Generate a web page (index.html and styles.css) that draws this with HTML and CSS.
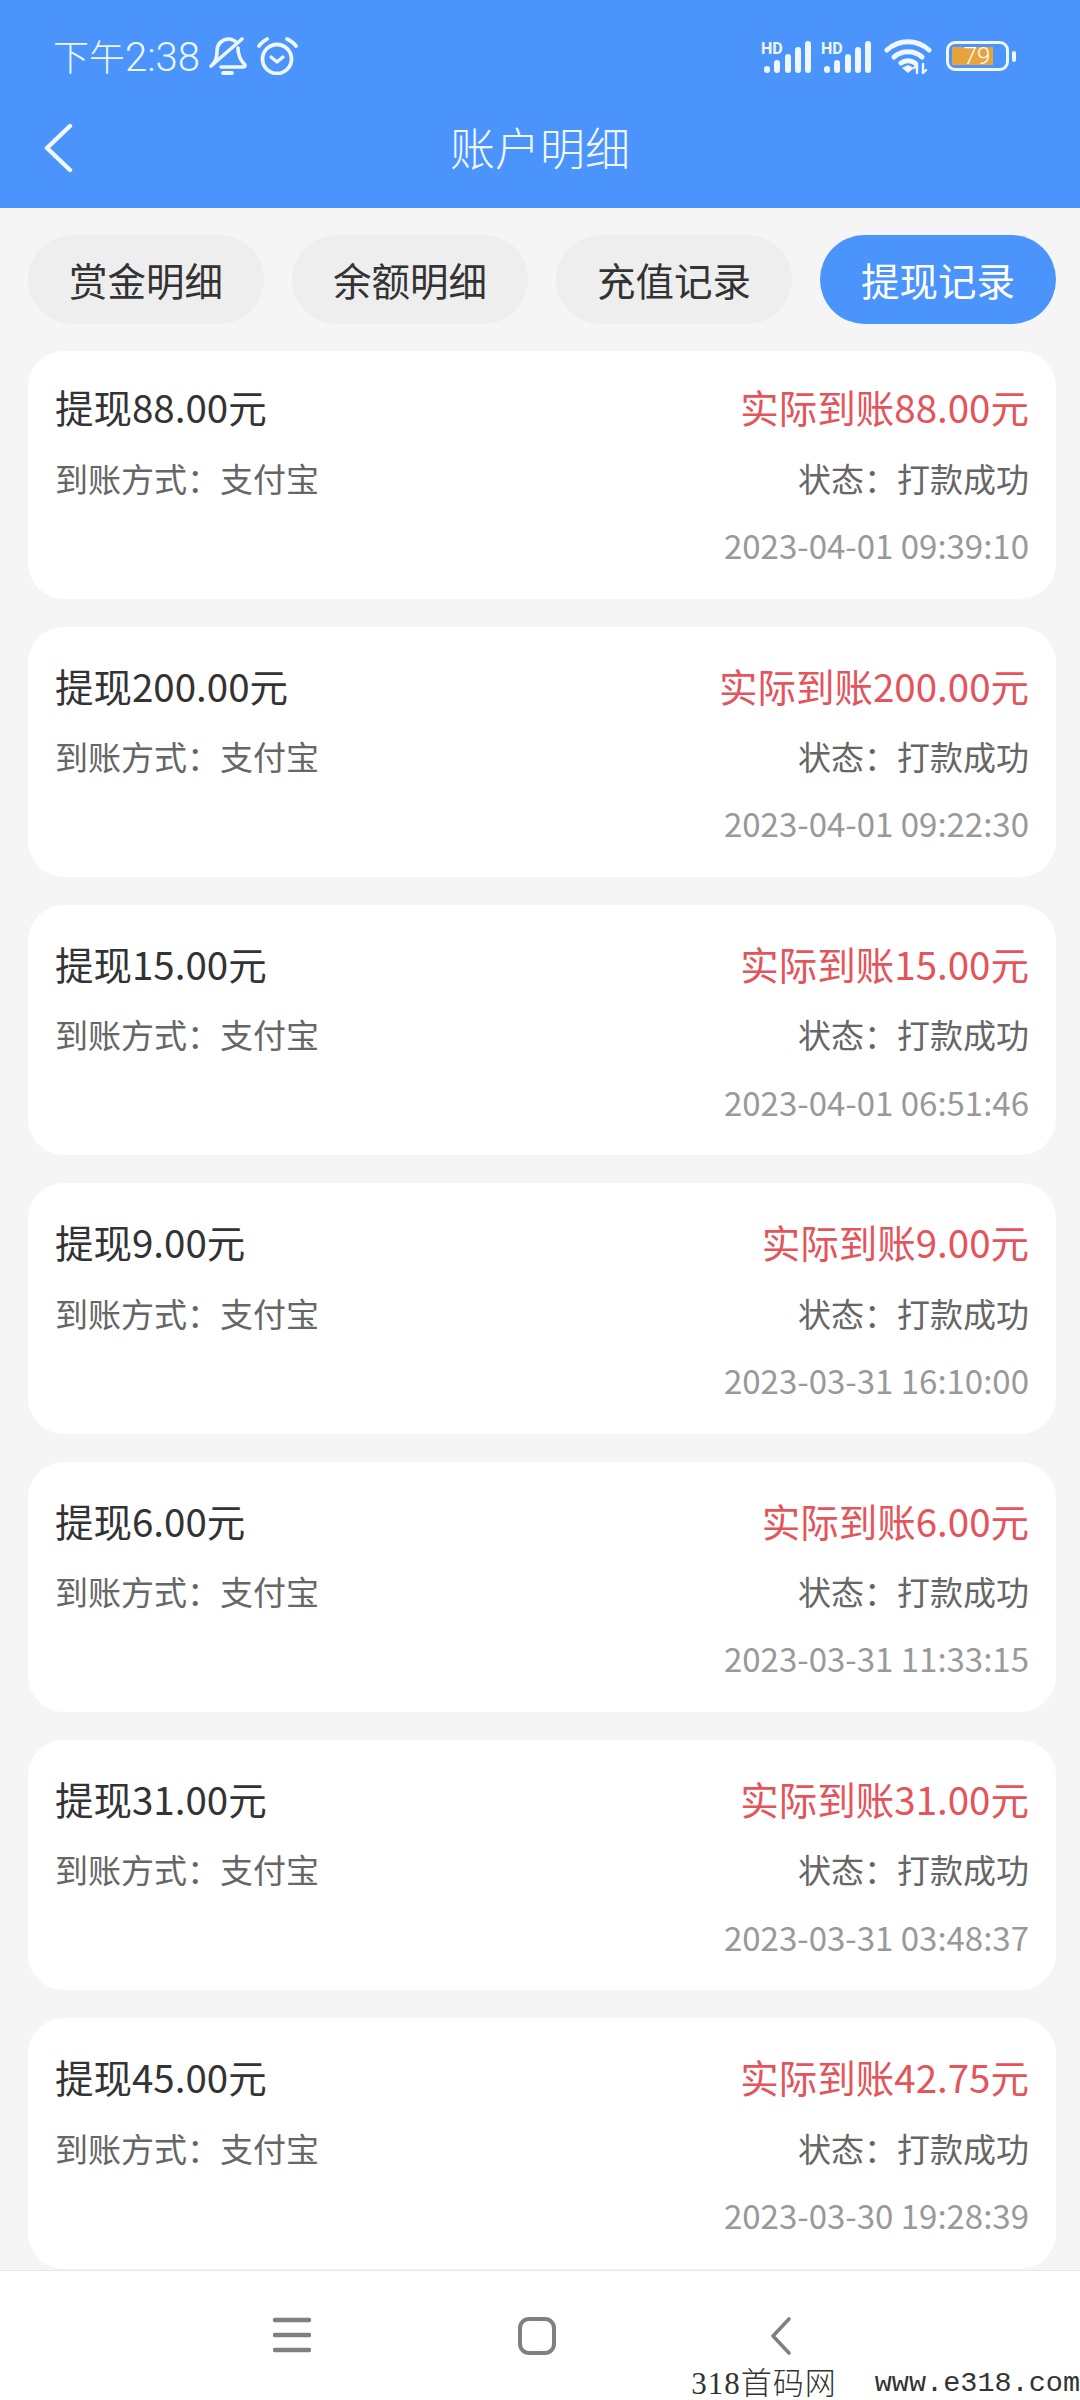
FILE: index.html
```html
<!DOCTYPE html>
<html lang="zh-CN">
<head>
    <meta charset="UTF-8">
    <meta name="viewport" content="width=device-width, initial-scale=1.0">
    <title>账户明细</title>
    <link rel="stylesheet" href="styles.css">
</head>
<body>
    <div class="page">
        <header class="header">
            <div class="status-bar">
                <div class="status-left">
                    <span class="clock">下午<span class="clock-digits">2:38</span></span>
                    <svg class="bell-icon" width="38" height="40" viewBox="0 0 38 40" fill="none" stroke="#eef6ff" stroke-width="3.6" stroke-linecap="round" stroke-linejoin="round">
                        <path d="M4 28C7 25 8 20 8 15 8 8 13 3 20 3c2 0 4 1 6 2"/>
                        <path d="M29 12c0 8 3 13 7 17 0 2-1 2-2 2H12"/>
                        <path d="M2 30L33 3"/>
                        <path d="M14 37h9" stroke-width="3.8"/>
                    </svg>
                    <svg class="alarm-icon" width="42" height="38" viewBox="0 0 42 38" fill="none" stroke="#eef6ff" stroke-width="3.8" stroke-linecap="round" stroke-linejoin="round">
                        <circle cx="20" cy="22" r="14.5"/>
                        <path d="M14 20l6 5 6-5" stroke-width="3.4"/>
                        <path d="M2 9c2-3 5-5 8-7"/>
                        <path d="M39 9c-2-3-5-5-9-7"/>
                    </svg>
                </div>
                <div class="status-right">
                    <svg class="signal-icon" width="50" height="33" viewBox="0 0 50 33">
                        <text x="0" y="14" class="hd-text">HD</text>
                        <rect x="3" y="26" width="6" height="7" rx="3" fill="#eef6ff"/>
                        <rect x="13" y="20" width="6" height="13" rx="3" fill="#eef6ff"/>
                        <rect x="24" y="14" width="6" height="19" rx="3" fill="#eef6ff"/>
                        <rect x="34" y="7" width="6" height="26" rx="3" fill="#eef6ff"/>
                        <rect x="44" y="1" width="6" height="32" rx="3" fill="#eef6ff"/>
                    </svg>
                    <svg class="signal-icon" width="50" height="33" viewBox="0 0 50 33">
                        <text x="0" y="14" class="hd-text">HD</text>
                        <rect x="3" y="26" width="6" height="7" rx="3" fill="#eef6ff"/>
                        <rect x="13" y="20" width="6" height="13" rx="3" fill="#eef6ff"/>
                        <rect x="24" y="14" width="6" height="19" rx="3" fill="#eef6ff"/>
                        <rect x="34" y="7" width="6" height="26" rx="3" fill="#eef6ff"/>
                        <rect x="44" y="1" width="6" height="32" rx="3" fill="#eef6ff"/>
                    </svg>
                    <svg class="wifi-icon" width="48" height="36" viewBox="0 0 48 36" fill="none" stroke="#eef6ff" stroke-width="5" stroke-linecap="round">
                        <path d="M3 12C15 1 33 1 45 12"/>
                        <path d="M10 19c8-7 20-7 28 0"/>
                        <path d="M17 25c4-3 10-3 14 0"/>
                        <path d="M18 30l6-3 6 3-6 5z" fill="#eef6ff" stroke="none"/>
                        <path d="M33 35v-8l-3 3M39 26v9l3-3" stroke-width="2.4"/>
                    </svg>
                    <div class="battery">
                        <div class="battery-body">
                            <div class="battery-level">79</div>
                        </div>
                        <div class="battery-tip"></div>
                    </div>
                </div>
            </div>
            <div class="toolbar">
                <svg class="back-icon" width="30" height="50" viewBox="0 0 30 50" fill="none" stroke="#f2f8ff" stroke-width="4.4" stroke-linecap="round" stroke-linejoin="round">
                    <path d="M27 3L4 25l23 22"/>
                </svg>
                <h1 class="page-title">账户明细</h1>
            </div>
        </header>

        <div class="tabs">
            <div class="tab">赏金明细</div>
            <div class="tab">余额明细</div>
            <div class="tab">充值记录</div>
            <div class="tab tab-active">提现记录</div>
        </div>

        <div class="record-list">
            <div class="record">
                <div class="record-row">
                    <div class="record-title">提现88.00元</div>
                    <div class="record-amount">实际到账88.00元</div>
                </div>
                <div class="record-row record-info">
                    <div>到账方式：支付宝</div>
                    <div>状态：打款成功</div>
                </div>
                <div class="record-time">2023-04-01 09:39:10</div>
            </div>
            <div class="record">
                <div class="record-row">
                    <div class="record-title">提现200.00元</div>
                    <div class="record-amount">实际到账200.00元</div>
                </div>
                <div class="record-row record-info">
                    <div>到账方式：支付宝</div>
                    <div>状态：打款成功</div>
                </div>
                <div class="record-time">2023-04-01 09:22:30</div>
            </div>
            <div class="record">
                <div class="record-row">
                    <div class="record-title">提现15.00元</div>
                    <div class="record-amount">实际到账15.00元</div>
                </div>
                <div class="record-row record-info">
                    <div>到账方式：支付宝</div>
                    <div>状态：打款成功</div>
                </div>
                <div class="record-time">2023-04-01 06:51:46</div>
            </div>
            <div class="record">
                <div class="record-row">
                    <div class="record-title">提现9.00元</div>
                    <div class="record-amount">实际到账9.00元</div>
                </div>
                <div class="record-row record-info">
                    <div>到账方式：支付宝</div>
                    <div>状态：打款成功</div>
                </div>
                <div class="record-time">2023-03-31 16:10:00</div>
            </div>
            <div class="record">
                <div class="record-row">
                    <div class="record-title">提现6.00元</div>
                    <div class="record-amount">实际到账6.00元</div>
                </div>
                <div class="record-row record-info">
                    <div>到账方式：支付宝</div>
                    <div>状态：打款成功</div>
                </div>
                <div class="record-time">2023-03-31 11:33:15</div>
            </div>
            <div class="record">
                <div class="record-row">
                    <div class="record-title">提现31.00元</div>
                    <div class="record-amount">实际到账31.00元</div>
                </div>
                <div class="record-row record-info">
                    <div>到账方式：支付宝</div>
                    <div>状态：打款成功</div>
                </div>
                <div class="record-time">2023-03-31 03:48:37</div>
            </div>
            <div class="record">
                <div class="record-row">
                    <div class="record-title">提现45.00元</div>
                    <div class="record-amount">实际到账42.75元</div>
                </div>
                <div class="record-row record-info">
                    <div>到账方式：支付宝</div>
                    <div>状态：打款成功</div>
                </div>
                <div class="record-time">2023-03-30 19:28:39</div>
            </div>
        </div>

        <nav class="nav-bar">
            <svg width="38" height="36" viewBox="0 0 38 36" fill="none" stroke="#808080" stroke-width="4.4" stroke-linecap="round">
                <path d="M2 3h34M2 18h34M2 33h34"/>
            </svg>
            <svg width="38" height="38" viewBox="0 0 38 38" fill="none" stroke="#808080" stroke-width="4">
                <rect x="2" y="2" width="34" height="34" rx="9"/>
            </svg>
            <svg class="nav-back" width="24" height="38" viewBox="0 0 24 38" fill="none" stroke="#808080" stroke-width="3.6" stroke-linecap="round" stroke-linejoin="round">
                <path d="M20 2L4 19l16 17"/>
            </svg>
        </nav>

        <div class="watermark"><span class="watermark-name">318首码网</span><span class="watermark-url">www.e318.com</span></div>
    </div>
</body>
</html>
```

FILE: styles.css
```css
* {
    box-sizing: border-box;
}
body {
    margin: 0;
    font-family: "Noto Sans CJK SC", "Noto Sans", sans-serif;
    background-color: #f5f5f5;
}
.page {
    position: relative;
    display: flex;
    flex-direction: column;
    width: 1080px;
    height: 2400px;
    overflow: hidden;
}
.header {
    height: 208px;
    background-color: #4b94fb;
    flex-shrink: 0;
}
.status-bar {
    display: flex;
    justify-content: space-between;
    align-items: center;
    height: 86px;
    padding: 26px 64px 0 53px;
}
.status-left {
    display: flex;
    align-items: center;
}
.clock {
    font-size: 36px;
    font-weight: 300;
    color: #eef6ff;
    line-height: 40px;
}
.clock-digits {
    font-family: Roboto, sans-serif;
    font-weight: 300;
    font-size: 40px;
}
.bell-icon {
    margin-left: 9px;
}
.alarm-icon {
    margin-left: 10px;
}
.status-right {
    display: flex;
    align-items: center;
}
.status-right .signal-icon + .signal-icon {
    margin-left: 10px;
}
.hd-text {
    font-family: Roboto, sans-serif;
    font-size: 16px;
    font-weight: 700;
    fill: #eef6ff;
}
.wifi-icon {
    margin-left: 13px;
}
.battery {
    display: flex;
    align-items: center;
    margin-left: 14px;
}
.battery-body {
    width: 63px;
    height: 30px;
    border: 3px solid #eef6ff;
    border-radius: 9px;
    padding: 3px;
}
.battery-level {
    width: 41px;
    height: 18px;
    padding-left: 9px;
    background-color: #e8a33a;
    color: #fff;
    font-family: Roboto, sans-serif;
    font-weight: 300;
    font-size: 24px;
    line-height: 18px;
    text-align: center;
}
.battery-tip {
    width: 4px;
    height: 11px;
    margin-left: 3px;
    border-radius: 2px;
    background-color: #eef6ff;
}
.toolbar {
    display: grid;
    grid-template-columns: 1fr auto 1fr;
    align-items: center;
    height: 120px;
}
.back-icon {
    margin: 3px 0 0 43px;
}
.page-title {
    margin: 0;
    font-size: 45px;
    font-weight: 300;
    color: #f2f8ff;
}
.tabs {
    display: flex;
    gap: 28px;
    padding: 27px 24px 0 28px;
    flex-shrink: 0;
}
.tab {
    width: 236px;
    height: 89px;
    border-radius: 45px;
    background-color: #eeeeee;
    color: #333;
    font-size: 38.5px;
    line-height: 89px;
    text-align: center;
}
.tab-active {
    background-color: #4b94fb;
    color: #fff;
}
.record-list {
    flex: 1;
    display: flex;
    flex-direction: column;
    gap: 28px;
    padding: 27px 24px 0 28px;
    overflow: hidden;
}
.record {
    height: 250.33px;
    flex-shrink: 0;
    padding: 33px 27px 0;
    border-radius: 36px;
    background-color: #fff;
}
.record:first-child {
    height: 247.6px;
    padding-top: 30.3px;
}
.record-row {
    display: flex;
    justify-content: space-between;
}
.record-title {
    font-size: 38.5px;
    line-height: 50px;
    color: #333;
}
.record-amount {
    font-size: 38.5px;
    line-height: 50px;
    color: #e4545a;
}
.record-info {
    margin-top: 24.4px;
    font-size: 33px;
    line-height: 44px;
    color: #666;
}
.record-time {
    margin-top: 23.5px;
    font-size: 33px;
    line-height: 44px;
    color: #999;
    text-align: right;
}
.nav-bar {
    display: flex;
    align-items: flex-start;
    gap: 207px;
    height: 130px;
    padding: 46px 0 0 273px;
    border-top: 1px solid #e6e6e6;
    background-color: #fff;
    flex-shrink: 0;
}
.nav-back {
    margin-left: 6px;
}
.watermark {
    position: absolute;
    right: 0;
    bottom: 0;
    display: flex;
    gap: 38px;
    font-size: 31px;
    line-height: 32px;
    font-weight: 300;
    color: #333;
    white-space: nowrap;
}
.watermark-name {
    font-family: "Liberation Serif", "Noto Sans CJK SC", serif;
    letter-spacing: 1px;
}
.watermark-url {
    font-family: "Liberation Mono", monospace;
    font-size: 28.5px;
}
```
